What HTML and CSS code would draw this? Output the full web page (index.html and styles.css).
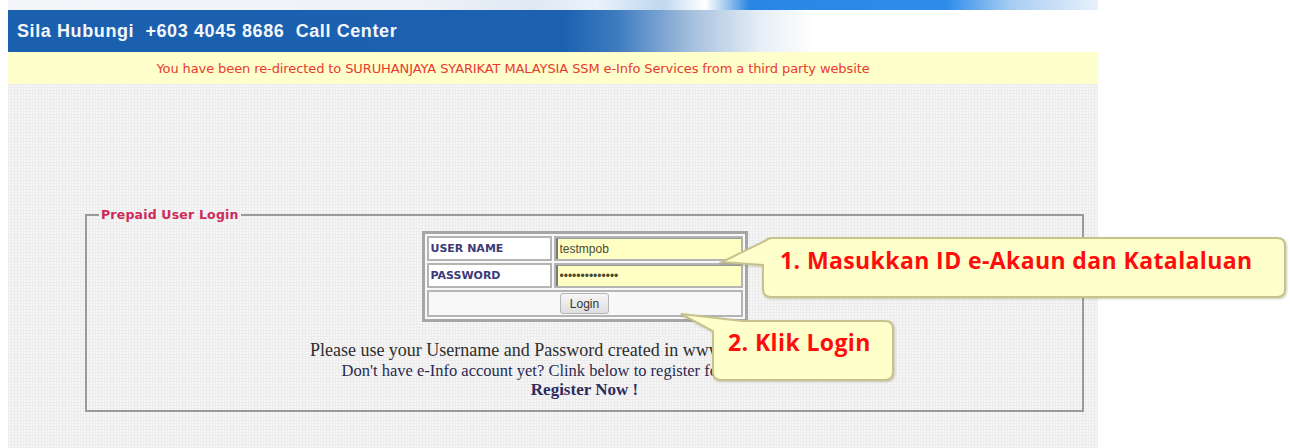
FILE: index.html
```html
<!DOCTYPE html>
<html>
<head>
<meta charset="utf-8">
<title>SSM e-Info Login</title>
<link rel="stylesheet" href="styles.css">
</head>
<body>
<div class="page">
  <div class="sky"></div>
  <div class="bar">Sila Hubungi&nbsp; +603 4045 8686&nbsp; Call Center</div>
  <div class="notice">You have been re-directed to SURUHANJAYA SYARIKAT MALAYSIA SSM e-Info Services from a third party website</div>
  <div class="content">
    <fieldset class="box">
      <legend class="box-title">Prepaid User Login</legend>
      <table class="login">
        <tr>
          <td class="lbl">USER NAME</td>
          <td class="fld"><input class="inp" type="text" value="testmpob"></td>
        </tr>
        <tr>
          <td class="lbl">PASSWORD</td>
          <td class="fld"><input class="inp" type="password" value="xxxxxxxxxxxxxx"></td>
        </tr>
        <tr>
          <td class="btn-cell" colspan="2"><button class="btn">Login</button></td>
        </tr>
      </table>
      <p class="l1">Please use your Username and Password created in www.ssm-einfo.com.my</p>
      <p class="l2">Don't have e-Info account yet? Clink below to register for e-Info account.</p>
      <p class="l3">Register Now !</p>
    </fieldset>
  </div>
</div>

<div class="callout c1">
  <svg class="shape" width="575" height="72" viewBox="0 0 575 72">
    <path d="M57 6 H562 Q570 6 570 14 V57 Q570 65 562 65 H56 Q48 65 48 57 V33 L7 30 L50 9 Q53 6 57 6 Z" fill="#ffffcc" stroke="#c8c38c" stroke-width="2"/>
  </svg>
  <span class="ctext t1">1. Masukkan ID e-Akaun dan Katalaluan</span>
</div>
<div class="callout c2">
  <svg class="shape" width="230" height="80" viewBox="0 0 230 80">
    <path d="M70 15 H213 Q221 15 221 23 V66 Q221 74 213 74 H49 Q41 74 41 66 V25 L9 8 Z" fill="#ffffcc" stroke="#c8c38c" stroke-width="2"/>
  </svg>
  <span class="ctext t2">2. Klik Login</span>
</div>
</body>
</html>
```
FILE: styles.css
```css
html, body {
  margin: 0;
  padding: 0;
  background: #ffffff;
}

.page {
  width: 1090px;
  margin-left: 8px;
}

.sky {
  height: 10px;
  background: linear-gradient(90deg, #f3f5f9 0%, #eef2f8 38%, #dfe9f5 48%, #eaf2fb 54%, #bfd7ef 60%, #ffffff 64%, #9cc4ec 66%, #2a86e4 68%, #2d8cea 86%, #a8cdf2 92%, #e8f1fb 100%);
}

.bar {
  height: 42px;
  box-sizing: border-box;
  padding-left: 9px;
  display: flex;
  align-items: center;
  color: #f4f7fb;
  font-family: "Liberation Sans", Arial, sans-serif;
  font-weight: bold;
  font-size: 18px;
  letter-spacing: 0.6px;
  background: linear-gradient(90deg, #1b5faf 0%, #1c62b1 51%, #3f7cc0 56%, #a9c2de 63%, #e6eef7 69%, #ffffff 74%, #ffffff 100%);
}

.notice {
  height: 32px;
  box-sizing: border-box;
  padding-right: 80px;
  display: flex;
  align-items: center;
  justify-content: center;
  background: #ffffcc;
  color: #e8392e;
  font-family: "DejaVu Sans", Verdana, sans-serif;
  font-size: 13px;
  letter-spacing: -0.1px;
}

.content {
  padding: 123px 14px 39px 77px;
  background-color: #f6f6f6;
  background-image:
    linear-gradient(#ececec 1px, transparent 1px),
    linear-gradient(90deg, #ececec 1px, transparent 1px);
  background-size: 3px 3px;
}

.box {
  margin: 0;
  padding: 9px 0 10px;
  border: 2px solid #9a9a9a;
  border-radius: 0;
}

.box-title {
  margin-left: 12px;
  padding: 0 2px;
  color: #cc2a5a;
  font-family: "DejaVu Sans", Verdana, sans-serif;
  font-weight: bold;
  font-size: 12.5px;
  letter-spacing: 0.2px;
}

.login {
  margin: 0 auto;
  border: 3px solid #a6a6a6;
  border-spacing: 2px;
  background: #f8f8f8;
}

.login td {
  border: 2px solid #b4b4b4;
  padding: 0;
  height: 21px;
}

.lbl {
  width: 119px;
  padding-left: 2px !important;
  color: #3c3a78;
  font-family: "DejaVu Sans", Verdana, sans-serif;
  font-weight: bold;
  font-size: 11px;
  background: #ffffff;
}

.fld {
  width: 185px;
  background: #ffffc4;
}

.inp {
  display: block;
  width: 100%;
  height: 21px;
  box-sizing: border-box;
  margin: 0;
  padding: 0 2px;
  border: none;
  border-left: 2px solid #7b7b7b;
  border-top: 1px solid #9a9a9a;
  background: #ffffc4;
  color: #4a4a30;
  font-family: "Liberation Sans", Arial, sans-serif;
  font-size: 12px;
  outline: none;
}

.btn-cell {
  text-align: center;
  height: 23px !important;
}

.btn {
  width: 49px;
  height: 21px;
  padding: 0;
  border: 1px solid #b5b5b5;
  border-radius: 3px;
  background: linear-gradient(#f6f6f6, #dedede);
  color: #333333;
  font-family: "Liberation Sans", Arial, sans-serif;
  font-size: 12px;
}

.l1, .l2, .l3 {
  margin: 0;
  text-align: center;
  font-family: "Liberation Serif", "Times New Roman", serif;
}

.l1 {
  margin-top: 18px;
  font-size: 18px;
  line-height: 21px;
  color: #2e2e2e;
}

.l2 {
  font-size: 16.5px;
  line-height: 19px;
  color: #2a2a50;
}

.l3 {
  font-size: 17px;
  line-height: 20px;
  font-weight: bold;
  color: #2d2d5e;
}

.callout {
  position: absolute;
}

.callout .shape {
  display: block;
  filter: drop-shadow(1px 1px 1px rgba(120, 110, 60, 0.35));
}

.c1 {
  left: 715px;
  top: 232px;
}

.c2 {
  left: 672px;
  top: 306px;
}

.ctext {
  position: absolute;
  white-space: nowrap;
  color: #ff0d0d;
  font-family: "Open Sans", "DejaVu Sans", sans-serif;
  font-weight: bold;
  font-size: 23px;
  line-height: 26px;
  letter-spacing: 0.4px;
}

.t1 {
  left: 65px;
  top: 15px;
}

.t2 {
  left: 56px;
  top: 23px;
}
```
